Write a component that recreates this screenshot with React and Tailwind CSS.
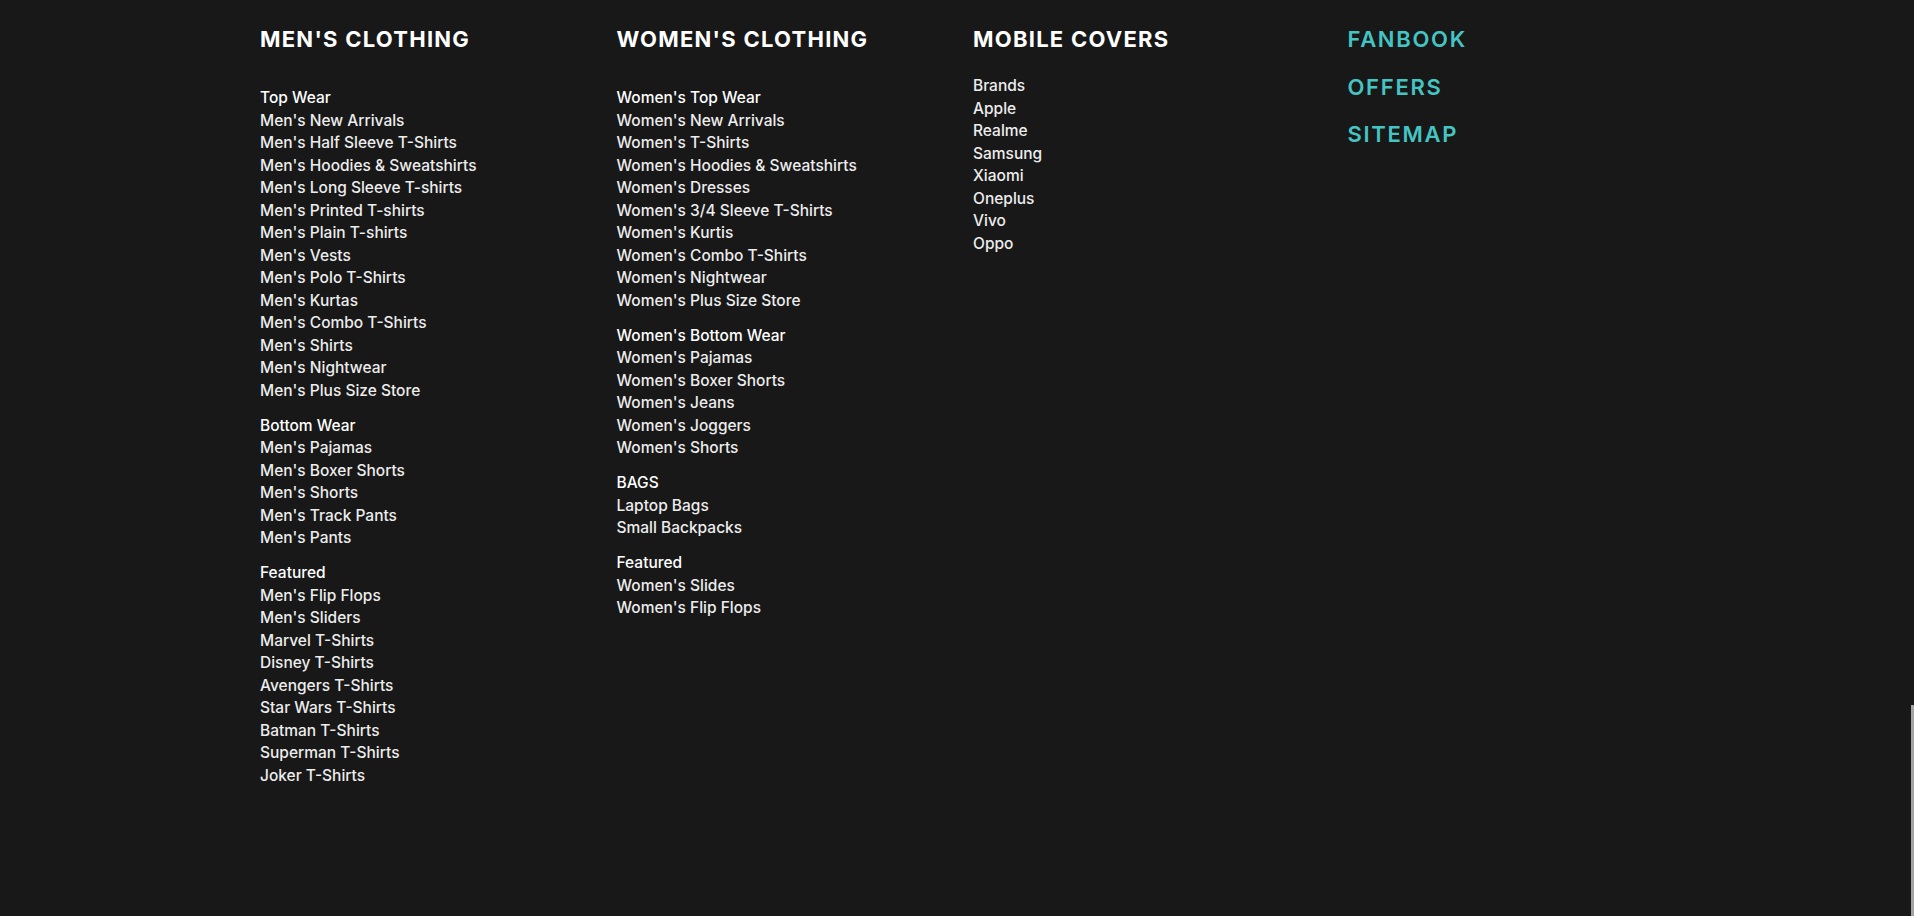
import React from "react";

const men = [
  { title: "Top Wear", items: ["Men's New Arrivals", "Men's Half Sleeve T-Shirts", "Men's Hoodies & Sweatshirts", "Men's Long Sleeve T-shirts", "Men's Printed T-shirts", "Men's Plain T-shirts", "Men's Vests", "Men's Polo T-Shirts", "Men's Kurtas", "Men's Combo T-Shirts", "Men's Shirts", "Men's Nightwear", "Men's Plus Size Store"] },
  { title: "Bottom Wear", items: ["Men's Pajamas", "Men's Boxer Shorts", "Men's Shorts", "Men's Track Pants", "Men's Pants"] },
  { title: "Featured", items: ["Men's Flip Flops", "Men's Sliders", "Marvel T-Shirts", "Disney T-Shirts", "Avengers T-Shirts", "Star Wars T-Shirts", "Batman T-Shirts", "Superman T-Shirts", "Joker T-Shirts"] },
];

const women = [
  { title: "Women's Top Wear", items: ["Women's New Arrivals", "Women's T-Shirts", "Women's Hoodies & Sweatshirts", "Women's Dresses", "Women's 3/4 Sleeve T-Shirts", "Women's Kurtis", "Women's Combo T-Shirts", "Women's Nightwear", "Women's Plus Size Store"] },
  { title: "Women's Bottom Wear", items: ["Women's Pajamas", "Women's Boxer Shorts", "Women's Jeans", "Women's Joggers", "Women's Shorts"] },
  { title: "BAGS", items: ["Laptop Bags", "Small Backpacks"] },
  { title: "Featured", items: ["Women's Slides", "Women's Flip Flops"] },
];

const mobile = ["Brands", "Apple", "Realme", "Samsung", "Xiaomi", "Oneplus", "Vivo", "Oppo"];

function Heading({ children }) {
  return (
    <h3 className="text-[22px] leading-[28px] font-bold tracking-[1.25px] text-white">{children}</h3>
  );
}

function Group({ title, items }) {
  return (
    <div className="mt-[12.5px] first:mt-0">
      <div className="text-white leading-[22.5px]">{title}</div>
      <ul>
        {items.map((it) => (
          <li key={it} className="leading-[22.5px] text-[#ededed]">{it}</li>
        ))}
      </ul>
    </div>
  );
}

export default function App() {
  return (
    <div
      className="min-h-[916px] w-full bg-[#181818] text-[15.5px] font-medium"
      style={{ fontFamily: "Inter, 'Open Sans', sans-serif" }}
    >
      <div className="mx-auto flex w-[1394px] pt-[25px]">
        <div className="w-[356.5px] shrink-0">
          <Heading>MEN'S CLOTHING</Heading>
          <div className="mt-[34px]">
            {men.map((g) => (
              <Group key={g.title} {...g} />
            ))}
          </div>
        </div>
        <div className="w-[356.5px] shrink-0">
          <Heading>WOMEN'S CLOTHING</Heading>
          <div className="mt-[34px]">
            {women.map((g) => (
              <Group key={g.title} {...g} />
            ))}
          </div>
        </div>
        <div className="w-[374.5px] shrink-0">
          <Heading>MOBILE COVERS</Heading>
          <ul className="mt-[22px]">
            {mobile.map((m) => (
              <li key={m} className="leading-[22.5px] text-[#ededed]">{m}</li>
            ))}
          </ul>
        </div>
        <div className="flex flex-col gap-[19.5px]">
          <a className="text-[22px] leading-[28px] font-semibold tracking-[1.7px] text-[#45c4c4]">FANBOOK</a>
          <a className="text-[22px] leading-[28px] font-semibold tracking-[1.7px] text-[#45c4c4]">OFFERS</a>
          <a className="text-[22px] leading-[28px] font-semibold tracking-[1.7px] text-[#45c4c4]">SITEMAP</a>
        </div>
      </div>
      <div className="fixed right-0 top-[705px] bottom-0 w-[3px] bg-[#a3a3a3]" />
    </div>
  );
}
